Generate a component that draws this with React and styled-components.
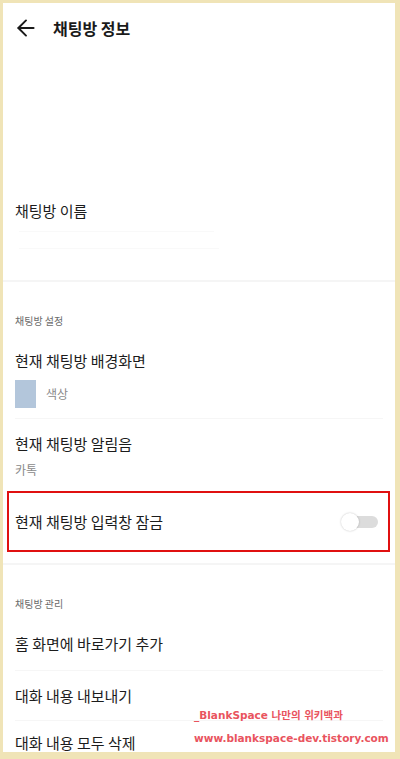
import React, { useState } from 'react';
import styled, { createGlobalStyle } from 'styled-components';
import { ArrowLeft } from 'lucide-react';

const GlobalStyle = createGlobalStyle`
  html, body {
    margin: 0;
    padding: 0;
    background: #f0e4b7;
  }
  body {
    font-family: "Noto Sans CJK KR", "Noto Sans", sans-serif;
  }
`;

function App() {
  const [locked, setLocked] = useState(false);

  return (
    <>
      <GlobalStyle />
      <StFrame>
        <StHeader>
          <StBackButton>
            <ArrowLeft size={26} strokeWidth={1.8} color="#1a1a1a" />
          </StBackButton>
          <StTitle>채팅방 정보</StTitle>
        </StHeader>

        <StProfile>
          <StItemTitle>채팅방 이름</StItemTitle>
          <StFaint width="195px" top="8px" />
          <StFaint width="200px" top="16px" />
        </StProfile>

        <StDivider />

        <StSectionLabel>채팅방 설정</StSectionLabel>

        <StItem top="20px" bottom="10px">
          <StItemTitle>현재 채팅방 배경화면</StItemTitle>
          <StSwatchRow>
            <StSwatch />
            <StSubText>색상</StSubText>
          </StSwatchRow>
        </StItem>
        <StThinLine />

        <StItem top="13px" bottom="12px">
          <StItemTitle>현재 채팅방 알림음</StItemTitle>
          <StSubText top="5px">카톡</StSubText>
        </StItem>

        <StToggleRow highlighted>
          <StItemTitle>현재 채팅방 입력창 잠금</StItemTitle>
          <StToggle on={locked} onClick={() => setLocked(!locked)}>
            <StKnob on={locked} />
          </StToggle>
        </StToggleRow>

        <StDivider top="11px" />

        <StSectionLabel>채팅방 관리</StSectionLabel>

        <StItem top="20px" bottom="14px">
          <StItemTitle>홈 화면에 바로가기 추가</StItemTitle>
        </StItem>
        <StThinLine />

        <StItem top="13px" bottom="12px">
          <StItemTitle>대화 내용 내보내기</StItemTitle>
        </StItem>
        <StThinLine />

        <StItem top="13px" bottom="0">
          <StItemTitle tight>대화 내용 모두 삭제</StItemTitle>
        </StItem>

        <StWatermark>
          <StMarkLine>_BlankSpace 나만의 위키백과</StMarkLine>
          <StMarkLine>www.blankspace-dev.tistory.com</StMarkLine>
        </StWatermark>
      </StFrame>
    </>
  );
}

const StFrame = styled.div`
  position: relative;
  display: flex;
  flex-direction: column;
  margin: 3px 5px 0 3px;
  height: 749px;
  background: #ffffff;
  overflow: hidden;
`;

const StHeader = styled.div`
  display: flex;
  align-items: center;
  gap: 14px;
  height: 50px;
  padding-left: 10px;
  flex-shrink: 0;
`;

const StBackButton = styled.div`
  display: flex;
  width: 26px;
  height: 26px;
  cursor: pointer;
`;

const StTitle = styled.h1`
  margin: 0;
  font-size: 16px;
  font-weight: 700;
  color: #1a1a1a;
  line-height: 24px;
`;

const StProfile = styled.div`
  display: flex;
  flex-direction: column;
  height: 227px;
  padding: 146px 12px 0;
  box-sizing: border-box;
  flex-shrink: 0;
`;

const StFaint = styled.div`
  width: ${(props) => props.width};
  height: 1px;
  margin-top: ${(props) => props.top};
  margin-left: 4px;
  background: #f9f9f9;
`;

const StDivider = styled.div`
  height: 2px;
  margin-top: ${(props) => props.top || '0'};
  background: #f5f5f5;
  flex-shrink: 0;
`;

const StThinLine = styled.div`
  height: 1px;
  margin: 0 12px;
  background: #f6f6f6;
  flex-shrink: 0;
`;

const StSectionLabel = styled.div`
  padding: 31px 12px 0;
  font-size: 10px;
  line-height: 16px;
  color: #6b6b6b;
  flex-shrink: 0;
`;

const StItem = styled.div`
  display: flex;
  flex-direction: column;
  padding: ${(props) => props.top} 12px ${(props) => props.bottom};
  flex-shrink: 0;
`;

const StItemTitle = styled.div`
  font-size: 15px;
  line-height: ${(props) => (props.tight ? '18px' : '24px')};
  color: #1c1c1c;
`;

const StSwatchRow = styled.div`
  display: flex;
  align-items: center;
  gap: 10px;
  margin-top: 7px;
`;

const StSwatch = styled.div`
  width: 21px;
  height: 28px;
  background: #b3c6db;
`;

const StSubText = styled.div`
  margin-top: ${(props) => props.top || '0'};
  font-size: 12px;
  line-height: 18px;
  color: #8a8a8a;
`;

const StToggleRow = styled.div`
  display: flex;
  align-items: center;
  justify-content: space-between;
  height: 61px;
  margin: 0 5px 0 4px;
  padding: 0 10px 0 6px;
  box-sizing: border-box;
  border: 2px solid ${(props) => (props.highlighted ? '#e01010' : 'transparent')};
  flex-shrink: 0;
`;

const StToggle = styled.div`
  position: relative;
  display: flex;
  align-items: center;
  width: 37px;
  height: 18px;
  cursor: pointer;

  &::before {
    content: '';
    position: absolute;
    left: 5px;
    right: 0;
    height: 12px;
    border-radius: 6px;
    background: ${(props) => (props.on ? '#fae100' : '#dcdcdc')};
  }
`;

const StKnob = styled.div`
  position: absolute;
  left: ${(props) => (props.on ? '19px' : '0')};
  width: 18px;
  height: 18px;
  border-radius: 50%;
  background: #ffffff;
  box-shadow: 0 0 2px rgba(0, 0, 0, 0.25);
`;

const StWatermark = styled.div`
  position: absolute;
  left: 191px;
  top: 704px;
  display: flex;
  flex-direction: column;
  gap: 6px;
`;

const StMarkLine = styled.div`
  font-family: "DejaVu Sans", "Noto Sans CJK KR", sans-serif;
  font-size: 10.5px;
  font-weight: 700;
  line-height: 17px;
  color: #e9545e;
  white-space: nowrap;
`;

export default App;
